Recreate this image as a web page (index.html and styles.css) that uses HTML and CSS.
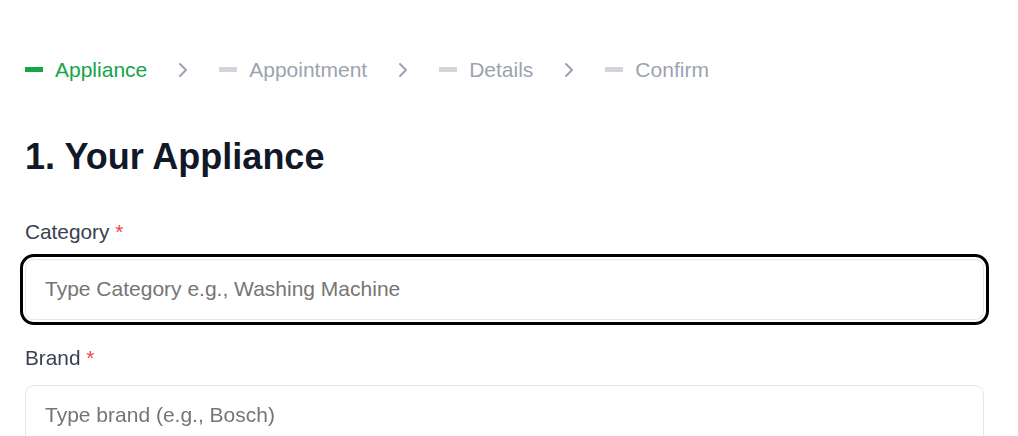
FILE: index.html
```html
<!DOCTYPE html>
<html lang="en">
<head>
<meta charset="utf-8">
<title>Book a repair</title>
<link rel="stylesheet" href="styles.css">
</head>
<body>
<main class="page">
  <nav class="stepper">
    <div class="step step-active"><span class="step-bar"></span><span class="step-label">Appliance</span></div>
    <svg class="chev" viewBox="0 0 24 24" width="24" height="24"><path d="m9 18 6-6-6-6"/></svg>
    <div class="step"><span class="step-bar"></span><span class="step-label">Appointment</span></div>
    <svg class="chev" viewBox="0 0 24 24" width="24" height="24"><path d="m9 18 6-6-6-6"/></svg>
    <div class="step"><span class="step-bar"></span><span class="step-label">Details</span></div>
    <svg class="chev" viewBox="0 0 24 24" width="24" height="24"><path d="m9 18 6-6-6-6"/></svg>
    <div class="step"><span class="step-bar"></span><span class="step-label">Confirm</span></div>
  </nav>

  <h1 class="title">1. Your Appliance</h1>

  <form class="form">
    <div class="field">
      <label class="label" for="category">Category <span class="req">*</span></label>
      <input id="category" class="input is-focused" type="text" placeholder="Type Category e.g., Washing Machine" autofocus>
    </div>
    <div class="field">
      <label class="label" for="brand">Brand <span class="req">*</span></label>
      <input id="brand" class="input" type="text" placeholder="Type brand (e.g., Bosch)">
    </div>
  </form>
</main>
</body>
</html>
```

FILE: styles.css
```css
* { box-sizing: border-box; }
html, body { margin: 0; padding: 0; background: #ffffff; }
body {
  font-family: "Liberation Sans", Arial, sans-serif;
  font-size: 20.8px;
  line-height: 1.5;
  color: #374151;
  overflow: hidden;
}
.page {
  padding: 54px 34px 0 25px;
}
.stepper {
  display: flex;
  align-items: center;
  gap: 24px;
  font-size: 21px;
  line-height: 31px;
}
.step {
  display: flex;
  align-items: center;
  gap: 12px;
  color: #9ca3af;
}
.step-bar {
  display: block;
  width: 18px;
  height: 5px;
  background: #d1d5db;
}
.step-active { color: #16a34a; }
.step-active .step-bar { background: #16a34a; }
.chev {
  fill: none;
  stroke: #9ca3af;
  stroke-width: 2;
  stroke-linecap: round;
  stroke-linejoin: round;
}
.title {
  margin: 50px 0 0;
  font-size: 36px;
  line-height: 1.2;
  font-weight: 700;
  color: #111827;
}
.form {
  margin-top: 38px;
  display: flex;
  flex-direction: column;
  gap: 22px;
}
.field {
  display: flex;
  flex-direction: column;
  gap: 11.6px;
}
.label {
  color: #374151;
}
.req { color: #ef4444; }
.input {
  height: 61px;
  width: 100%;
  padding: 0 19px;
  border: 1px solid #e5e7eb;
  border-radius: 9px;
  font-family: inherit;
  font-size: 21px;
  color: #111827;
  background: #ffffff;
  outline: none;
}
.input::placeholder { color: #757575; opacity: 1; }
.input.is-focused {
  outline: 3px solid #000000;
  outline-offset: 2px;
}
```
